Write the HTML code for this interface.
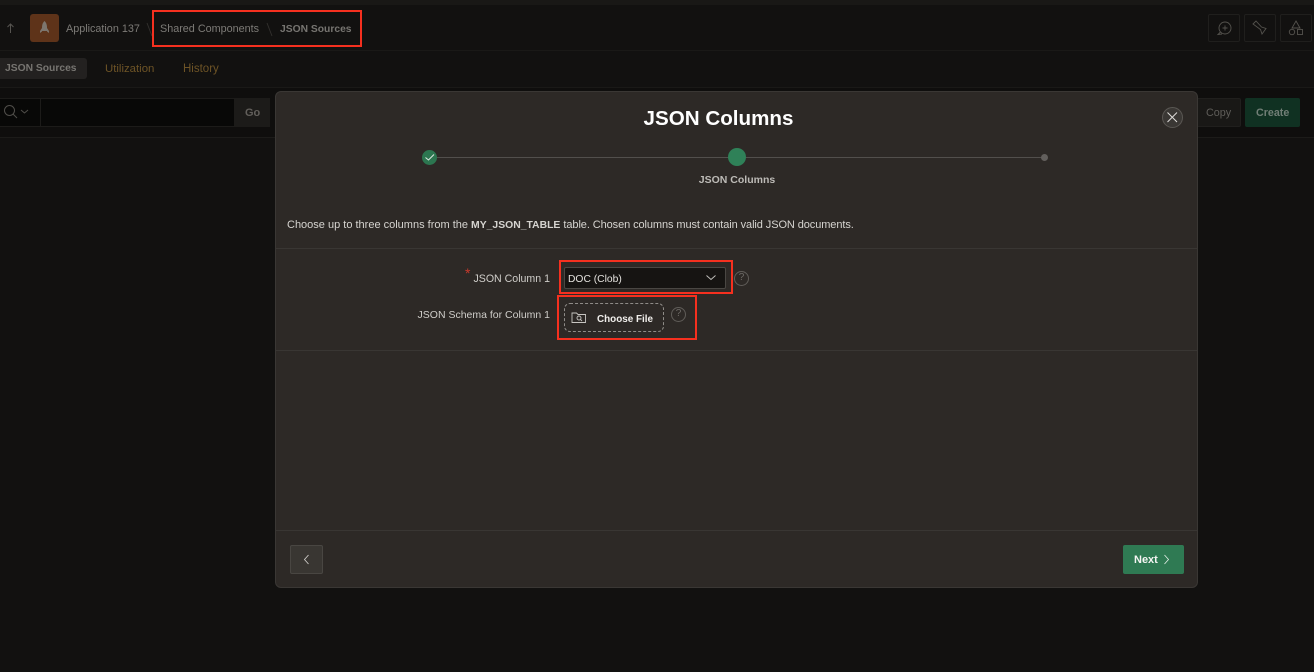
<!DOCTYPE html>
<html lang="en"><head><meta charset="utf-8"><title>JSON Columns</title>
<style>
html,body{margin:0;padding:0;width:1314px;height:672px;overflow:hidden;background:#121110;font-family:"Liberation Sans",sans-serif}
.a{position:absolute}
.t{position:absolute;white-space:nowrap;line-height:16px;filter:blur(.25px)}
.r{position:absolute;border:2px solid #f5301f;box-sizing:border-box}
svg{position:absolute;overflow:visible}
</style></head><body>
<div class="a" style="left:0;top:0;width:1314px;height:5px;background:#191816"></div>
<div class="a" style="left:0;top:50px;width:1314px;height:1px;background:#1a1917"></div>
<div class="a" style="left:0;top:87px;width:1314px;height:1px;background:#1a1917"></div>
<div class="a" style="left:0;top:88px;width:1314px;height:50px;background:#0f0e0d"></div>
<div class="a" style="left:0;top:137px;width:1314px;height:1px;background:#1c1b19"></div>
<svg style="left:5px;top:22px" width="12" height="12" fill="none" stroke="#565450" stroke-width="1"><path d="M5.500 11V2M2.500 5 5.500 2 8.500 5"/></svg>
<div class="a" style="left:30px;top:14px;width:29px;height:28px;border-radius:3px;background:#5e3319"></div>
<svg style="left:38px;top:20px" width="13" height="16" fill="#7d766e"><path d="M6.500 1C8.500 3 9 5 9 8v3H4V8C4 5 4.500 3 6.500 1Z"/><path d="M4 8 2 11v2l2-1.500ZM9 8l2 3v2l-2-1.500Z"/></svg>
<div class="t" style="left:66px;top:21px;font-size:10.8px;color:#7d7b77">Application 137</div>
<svg style="left:146px;top:22px" width="8" height="15" fill="none" stroke="#33312e" stroke-width=".9"><path d="M1 1 6 14"/></svg>
<div class="t" style="left:160px;top:21px;font-size:10.8px;color:#7d7b77">Shared Components</div>
<svg style="left:266px;top:22px" width="8" height="15" fill="none" stroke="#33312e" stroke-width=".9"><path d="M1 1 6 14"/></svg>
<div class="t" style="left:280px;top:22px;font-size:10.3px;font-weight:700;color:#777571">JSON Sources</div>
<div class="r" style="left:152px;top:10px;width:210px;height:37px"></div>
<div class="a" style="left:1208px;top:14px;width:32px;height:28px;box-sizing:border-box;border:1px solid #201f1d;border-radius:2px"></div>
<div class="a" style="left:1244px;top:14px;width:32px;height:28px;box-sizing:border-box;border:1px solid #201f1d;border-radius:2px"></div>
<div class="a" style="left:1280px;top:14px;width:32px;height:28px;box-sizing:border-box;border:1px solid #201f1d;border-radius:2px"></div>
<svg style="left:1217px;top:21px" width="15" height="14" fill="none" stroke="#55534e" stroke-width=".9"><circle cx="8" cy="7" r="6"/><path d="M3.500 11 1 13.500 5 13M8 4.500v5M5.500 7h5"/></svg>
<svg style="left:1252px;top:20px" width="16" height="16" fill="none" stroke="#55534e" stroke-width=".9"><path d="M1 4 4 1 9.500 7 14 8.500 10 14 8.500 9.500Z"/></svg>
<svg style="left:1288px;top:20px" width="16" height="16" fill="none" stroke="#55534e" stroke-width=".9"><path d="M8 1 12 8H4Z"/><circle cx="4" cy="12" r="2.700"/><rect x="9.500" y="9.500" width="5" height="5"/></svg>
<div class="a" style="left:0;top:58px;width:87px;height:21px;border-radius:0 3px 3px 0;background:#232120"></div>
<div class="t" style="left:5px;top:61px;font-size:10.3px;font-weight:700;color:#777571">JSON Sources</div>
<div class="t" style="left:105px;top:61px;font-size:11.4px;color:#6e5426">Utilization</div>
<div class="t" style="left:183px;top:61px;font-size:11.5px;color:#6e5426">History</div>
<div class="a" style="left:-1px;top:98px;width:271px;height:29px;box-sizing:border-box;border:1px solid #1c1b19;background:#080807"></div>
<div class="a" style="left:40px;top:98px;width:1px;height:29px;background:#1c1b19"></div>
<div class="a" style="left:234px;top:98px;width:36px;height:29px;background:#1c1b19"></div>
<svg style="left:3px;top:104px" width="28" height="16" fill="none" stroke="#504e4a"><circle cx="6.500" cy="6.500" r="5"/><path d="M10 10 14 14M18 6l3.500 3L25 6"/></svg>
<div class="t" style="left:245px;top:105px;font-size:11px;font-weight:700;color:#625f5b">Go</div>
<div class="a" style="left:1190px;top:98px;width:51px;height:29px;box-sizing:border-box;border:1px solid #201f1d;background:#191816;border-radius:2px"></div>
<div class="t" style="left:1206px;top:105px;font-size:10.8px;color:#5f5d59">Copy</div>
<div class="a" style="left:1245px;top:98px;width:55px;height:29px;background:#103122;border-radius:2px"></div>
<div class="t" style="left:1256px;top:105px;font-size:10.7px;font-weight:700;color:#717e76">Create</div>

<div class="a" style="left:275px;top:91px;width:923px;height:497px;box-sizing:border-box;background:#2d2926;border:1px solid #3a3734;border-radius:6px"></div>
<div class="t" style="left:418.500px;width:600px;text-align:center;top:106px;line-height:26px;font-size:20.6px;font-weight:700;color:#fff">JSON Columns</div>
<div class="a" style="left:1162px;top:107px;width:19px;height:19px;border:1px solid #5a5753;border-radius:50%;background:#3a3734"></div>
<svg style="left:1167px;top:112px" width="11" height="11" fill="none" stroke="#dedcd9" stroke-width="1"><path d="M.5.500 10 10M10 .500 .5 10"/></svg>
<div class="a" style="left:430px;top:157px;width:614px;height:1px;background:#524f4c"></div>
<div class="a" style="left:422px;top:150px;width:15px;height:15px;border-radius:50%;background:#2c7650"></div>
<svg style="left:425px;top:153px" width="10" height="9" fill="none" stroke="#dfe9e3" stroke-width="1"><path d="M.5 4.500 3.500 7 9 1.500"/></svg>
<div class="a" style="left:728px;top:148px;width:18px;height:18px;border-radius:50%;background:#2f8158"></div>
<div class="a" style="left:1041px;top:154px;width:7px;height:7px;border-radius:50%;background:#625f5c"></div>
<div class="t" style="left:637px;width:200px;text-align:center;top:172px;font-size:10.5px;font-weight:700;color:#bdbbb7">JSON Columns</div>
<div class="t" style="left:287px;top:217px;font-size:11px;color:#d6d4d0">Choose up to three columns from the <b style="font-size:10.400px">MY_JSON_TABLE</b> <span style="letter-spacing:-.09px">table. Chosen columns must contain valid JSON documents.</span></div>
<div class="a" style="left:276px;top:248px;width:921px;height:1px;background:#393633"></div>
<div class="a" style="left:276px;top:350px;width:921px;height:1px;background:#393633"></div>
<div class="a" style="left:276px;top:530px;width:921px;height:1px;background:#393633"></div>
<div class="t" style="left:465px;top:266px;font-size:14px;line-height:14px;color:#c8392c">*</div>
<div class="t" style="left:350px;width:200px;text-align:right;top:271px;font-size:10.6px;color:#cfcdc9">JSON Column 1</div>
<div class="t" style="left:350px;width:200px;text-align:right;top:307px;font-size:10.5px;color:#cfcdc9">JSON Schema for Column 1</div>
<div class="a" style="left:564px;top:267px;width:162px;height:22px;box-sizing:border-box;background:#161412;border:1px solid #4a4743;border-radius:2px"></div>
<div class="t" style="left:568px;top:272px;font-size:10.3px;color:#e4e2de">DOC (Clob)</div>
<svg style="left:706px;top:275px" width="10" height="6" fill="none" stroke="#c5c3bf" stroke-width=".9"><path d="M.5.500 5 4.500 9.500.500"/></svg>
<div class="r" style="left:559px;top:260px;width:174px;height:34px"></div>
<div class="a" style="left:734px;top:271px;width:13px;height:13px;border:1px solid #605d59;border-radius:50%"></div>
<div class="t" style="left:734px;width:15px;text-align:center;top:270px;font-size:10px;color:#6d6a66">?</div>
<div class="a" style="left:564px;top:303px;width:100px;height:29px;box-sizing:border-box;border:1px dashed #8f8c88;border-radius:6px"></div>
<svg style="left:571px;top:312px" width="16" height="12" fill="none" stroke="#c8c6c2" stroke-width=".9"><path d="M1 1H5.500L7 2.500H14.500V10.500H1Z"/><circle cx="8" cy="6" r="2"/><path d="M9.500 7.500 11 9"/></svg>
<div class="t" style="left:597px;top:312px;font-size:9.900px;font-weight:700;color:#f1efec">Choose File</div>
<div class="r" style="left:557px;top:295px;width:140px;height:45px"></div>
<div class="a" style="left:671px;top:307px;width:13px;height:13px;border:1px solid #605d59;border-radius:50%"></div>
<div class="t" style="left:671px;width:15px;text-align:center;top:306px;font-size:10px;color:#6d6a66">?</div>
<div class="a" style="left:290px;top:545px;width:33px;height:29px;box-sizing:border-box;background:#393632;border:1px solid #494642;border-radius:2px"></div>
<svg style="left:303px;top:554px" width="7" height="11" fill="none" stroke="#cfcdc9" stroke-width=".9"><path d="M5.500 1 1.500 5.500 5.500 10"/></svg>
<div class="a" style="left:1123px;top:545px;width:61px;height:29px;background:#2f7a53;border-radius:2px"></div>
<div class="t" style="left:1134px;top:552px;font-size:11px;font-weight:700;color:#f4f4f2">Next</div>
<svg style="left:1163px;top:554px" width="7" height="11" fill="none" stroke="#e6efe9" stroke-width=".8"><path d="M1.500 1 5.500 5.500 1.500 10"/></svg>
</body></html>
